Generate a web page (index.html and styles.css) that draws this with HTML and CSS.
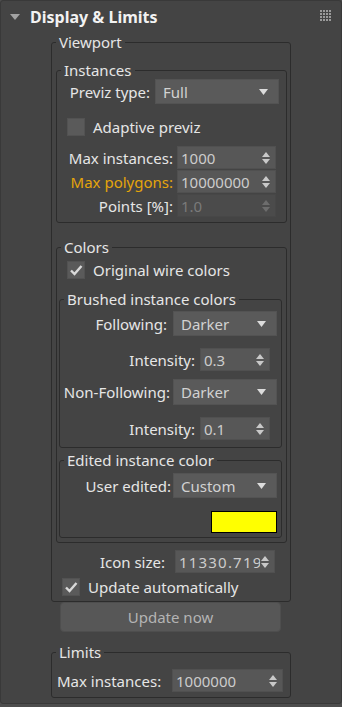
FILE: index.html
```html
<!DOCTYPE html>
<html lang="en">
  <head>
    <meta charset="UTF-8" />
    <meta name="viewport" content="width=device-width, initial-scale=1.0" />
    <title>Display &amp; Limits</title>
    <link rel="stylesheet" href="styles.css">
  </head>
  <body>
    <div class="panel">
      <div class="rollout-head">
        <svg class="caret" width="10" height="6" viewBox="0 0 10 6"><polygon points="0,0 10,0 5,6" fill="#a3a3a3" /></svg>
        <h2>Display &amp; Limits</h2>
        <svg class="grip" width="11" height="11" viewBox="0 0 11 11" fill="#9a9a9a">
          <rect x="0" y="0" width="2" height="2" /><rect x="3" y="0" width="2" height="2" /><rect x="6" y="0" width="2" height="2" /><rect x="9" y="0" width="2" height="2" />
          <rect x="0" y="3" width="2" height="2" /><rect x="3" y="3" width="2" height="2" /><rect x="6" y="3" width="2" height="2" /><rect x="9" y="3" width="2" height="2" />
          <rect x="0" y="6" width="2" height="2" /><rect x="3" y="6" width="2" height="2" /><rect x="6" y="6" width="2" height="2" /><rect x="9" y="6" width="2" height="2" />
          <rect x="0" y="9" width="2" height="2" /><rect x="3" y="9" width="2" height="2" /><rect x="6" y="9" width="2" height="2" /><rect x="9" y="9" width="2" height="2" />
        </svg>
      </div>

      <fieldset class="group viewport">
        <legend>Viewport</legend>

        <fieldset class="group instances">
          <legend>Instances</legend>
          <div class="row previz-row">
            <label>Previz type:</label>
            <div class="dropdown w124">Full<svg width="9" height="6" viewBox="0 0 9 6"><polygon points="0,0 9,0 4.5,6" /></svg></div>
          </div>
          <div class="check-row adaptive">
            <span class="check"></span>
            <span>Adaptive previz</span>
          </div>
          <div class="row spin-row first">
            <label>Max instances:</label>
            <div class="spinner w99"><span class="val">1000</span><svg width="8" height="12" viewBox="0 0 8 12"><polygon points="0,5 4,0 8,5" /><polygon points="0,7 8,7 4,12" /></svg></div>
          </div>
          <div class="row spin-row">
            <label class="warn">Max polygons:</label>
            <div class="spinner w99"><span class="val">10000000</span><svg width="8" height="12" viewBox="0 0 8 12"><polygon points="0,5 4,0 8,5" /><polygon points="0,7 8,7 4,12" /></svg></div>
          </div>
          <div class="row spin-row">
            <label>Points [%]:</label>
            <div class="spinner w99 disabled"><span class="val">1.0</span><svg width="8" height="12" viewBox="0 0 8 12"><polygon points="0,5 4,0 8,5" /><polygon points="0,7 8,7 4,12" /></svg></div>
          </div>
        </fieldset>

        <fieldset class="group colors">
          <legend>Colors</legend>
          <div class="check-row wire">
            <span class="check on"><svg width="14" height="12" viewBox="0 0 14 12"><path d="M2 6.5 L5.5 10 L12.5 2" /></svg></span>
            <span>Original wire colors</span>
          </div>

          <fieldset class="group brushed">
            <legend>Brushed instance colors</legend>
            <div class="row follow-row">
              <label>Following:</label>
              <div class="dropdown w104">Darker<svg width="9" height="6" viewBox="0 0 9 6"><polygon points="0,0 9,0 4.5,6" /></svg></div>
            </div>
            <div class="row intensity-row">
              <label>Intensity:</label>
              <div class="spinner w70"><span class="val">0.3</span><svg width="8" height="12" viewBox="0 0 8 12"><polygon points="0,5 4,0 8,5" /><polygon points="0,7 8,7 4,12" /></svg></div>
            </div>
            <div class="row nonfollow-row">
              <label>Non-Following:</label>
              <div class="dropdown w104 tall">Darker<svg width="9" height="6" viewBox="0 0 9 6"><polygon points="0,0 9,0 4.5,6" /></svg></div>
            </div>
            <div class="row intensity-row">
              <label>Intensity:</label>
              <div class="spinner w70"><span class="val">0.1</span><svg width="8" height="12" viewBox="0 0 8 12"><polygon points="0,5 4,0 8,5" /><polygon points="0,7 8,7 4,12" /></svg></div>
            </div>
          </fieldset>

          <fieldset class="group edited">
            <legend>Edited instance color</legend>
            <div class="row user-row">
              <label>User edited:</label>
              <div class="dropdown w104">Custom<svg width="9" height="6" viewBox="0 0 9 6"><polygon points="0,0 9,0 4.5,6" /></svg></div>
            </div>
            <div class="row swatch-row">
              <div class="swatch"></div>
            </div>
          </fieldset>
        </fieldset>

        <div class="row icon-row">
          <label>Icon size:</label>
          <div class="spinner w100"><span class="val wide">11330.719</span><svg width="8" height="12" viewBox="0 0 8 12"><polygon points="0,5 4,0 8,5" /><polygon points="0,7 8,7 4,12" /></svg></div>
        </div>
        <div class="check-row auto">
          <span class="check on"><svg width="14" height="12" viewBox="0 0 14 12"><path d="M2 6.5 L5.5 10 L12.5 2" /></svg></span>
          <span>Update automatically</span>
        </div>
      </fieldset>

      <button class="update-btn">Update now</button>

      <fieldset class="group limits">
        <legend>Limits</legend>
        <div class="row limit-row">
          <label>Max instances:</label>
          <div class="spinner w111"><span class="val">1000000</span><svg width="8" height="12" viewBox="0 0 8 12"><polygon points="0,5 4,0 8,5" /><polygon points="0,7 8,7 4,12" /></svg></div>
        </div>
      </fieldset>
    </div>
  </body>
</html>
```

FILE: styles.css
```css
* {
  margin: 0px;
  padding: 0px;
  box-sizing: border-box;
}
body {
  background-color: #4d4d4d;
  font-family: "Noto Sans", "Open Sans", sans-serif;
  font-size: 15px;
  color: #e6e6e6;
}
.panel {
  width: 342px;
  height: 704px;
  background-color: #444444;
  border: 1px solid #393939;
  border-radius: 3px;
}

/* header */
.rollout-head {
  height: 33px;
  display: flex;
  align-items: center;
  padding-left: 9px;
  padding-bottom: 2px;
}
.rollout-head h2 {
  font-size: 16px;
  font-weight: bold;
  color: #f2f2f2;
  margin-left: 10px;
  flex: 1;
}
.grip {
  margin-right: 10px;
  margin-bottom: 3px;
}

/* group boxes */
fieldset.group {
  border: 1px solid #2c2c2c;
  border-radius: 3px;
  padding: 0px;
  margin: 0px;
  min-inline-size: 0;
}
fieldset.group legend {
  line-height: 16px;
  margin-left: 4px;
  padding: 0px 3px;
}
.viewport {
  width: 240px;
  margin-left: 50px !important;
  padding-bottom: 5px !important;
}
.instances {
  width: 231px;
  margin: 12px 0px 0px 4px !important;
  padding-bottom: 5px !important;
}
.colors {
  width: 231px;
  margin: 16px 0px 0px 4px !important;
  padding-bottom: 4px !important;
}
.brushed {
  width: 223px;
  margin: 12px 0px 0px 2px !important;
  padding-bottom: 7px !important;
}
.edited {
  width: 223px;
  margin: 4px 0px 0px 2px !important;
  padding-bottom: 4px !important;
}
.limits {
  width: 240px;
  margin: 12px 0px 0px 50px !important;
  padding-bottom: 5px !important;
}

/* rows */
.row {
  display: flex;
  align-items: center;
  justify-content: flex-end;
}
.row label {
  margin-right: 4px;
  white-space: nowrap;
}
.warn {
  color: #e5a50b;
}
.previz-row {
  margin-top: 1px;
  padding-right: 7px;
}
.previz-row label {
  margin-right: 5px;
}
.spin-row {
  margin-top: 1px;
  padding-right: 10px;
}
.spin-row.first {
  margin-top: 10px;
}
.follow-row {
  margin-top: 4px;
  padding-right: 4px;
}
.follow-row label {
  margin-right: 6px;
}
.intensity-row {
  margin-top: 12px;
  padding-right: 11px;
}
.intensity-row label {
  margin-right: 5px;
}
.nonfollow-row {
  margin-top: 8px;
  padding-right: 4px;
}
.nonfollow-row label {
  margin-right: 3px;
}
.user-row {
  margin-top: 5px;
  padding-right: 4px;
}
.user-row label {
  margin-right: 2px;
}
.swatch-row {
  margin-top: 13px;
  padding-right: 4px;
}
.swatch {
  width: 66px;
  height: 22px;
  background-color: #ffff00;
  border: 1px solid #000000;
}
.icon-row {
  margin-top: 7px;
  padding-right: 15px;
}
.icon-row label {
  margin-right: 10px;
}
.limit-row {
  margin-top: 9px;
  padding: 0px 7px 0px 5px;
  justify-content: space-between;
}

/* checkboxes */
.check-row {
  display: flex;
  align-items: center;
  height: 18px;
}
.check {
  width: 18px;
  height: 18px;
  background-color: #5a5a5a;
  border: 1px solid #525252;
  margin-right: 8px;
  display: flex;
  align-items: center;
  justify-content: center;
}
.check svg path {
  fill: none;
  stroke: #d9d9d9;
  stroke-width: 2.4;
}
.adaptive {
  margin-top: 14px;
  padding-left: 10px;
}
.wire {
  margin-top: 6px;
  padding-left: 10px;
}
.auto {
  margin-top: 5px;
  padding-left: 10px;
}

/* dropdowns and spinners */
.dropdown {
  height: 25px;
  background-color: #5a5a5a;
  border: 1px solid #535353;
  color: #d2d2d2;
  padding: 0px 10px 0px 7px;
  display: flex;
  align-items: center;
  justify-content: space-between;
}
.dropdown.tall {
  height: 26px;
}
.dropdown svg polygon {
  fill: #dcdcdc;
}
.spinner {
  height: 23px;
  background-color: #575757;
  border: 1px solid #505050;
  color: #cccccc;
  padding: 0px 5px 0px 3px;
  display: flex;
  align-items: center;
}
.spinner .val {
  flex: 1;
  overflow: hidden;
  white-space: nowrap;
}
.spinner .val.wide {
  letter-spacing: 1.2px;
}
.spinner svg {
  flex-shrink: 0;
  margin-left: 1px;
}
.spinner svg polygon {
  fill: #c9c9c9;
}
.spinner.disabled {
  background-color: #4b4b4b;
  border-color: #474747;
  color: #7a7a7a;
}
.spinner.disabled svg polygon {
  fill: #6d6d6d;
}
.w124 { width: 124px; }
.w104 { width: 104px; }
.w99 { width: 99px; }
.w100 { width: 100px; }
.w70 { width: 70px; }
.w111 { width: 111px; }

/* button */
.update-btn {
  display: block;
  width: 221px;
  height: 30px;
  margin-left: 59px;
  background-color: #575757;
  border: 1px solid #4e4e4e;
  border-radius: 4px;
  color: #b4b4b4;
  font-family: "Noto Sans", "Open Sans", sans-serif;
  font-size: 15px;
}
```
